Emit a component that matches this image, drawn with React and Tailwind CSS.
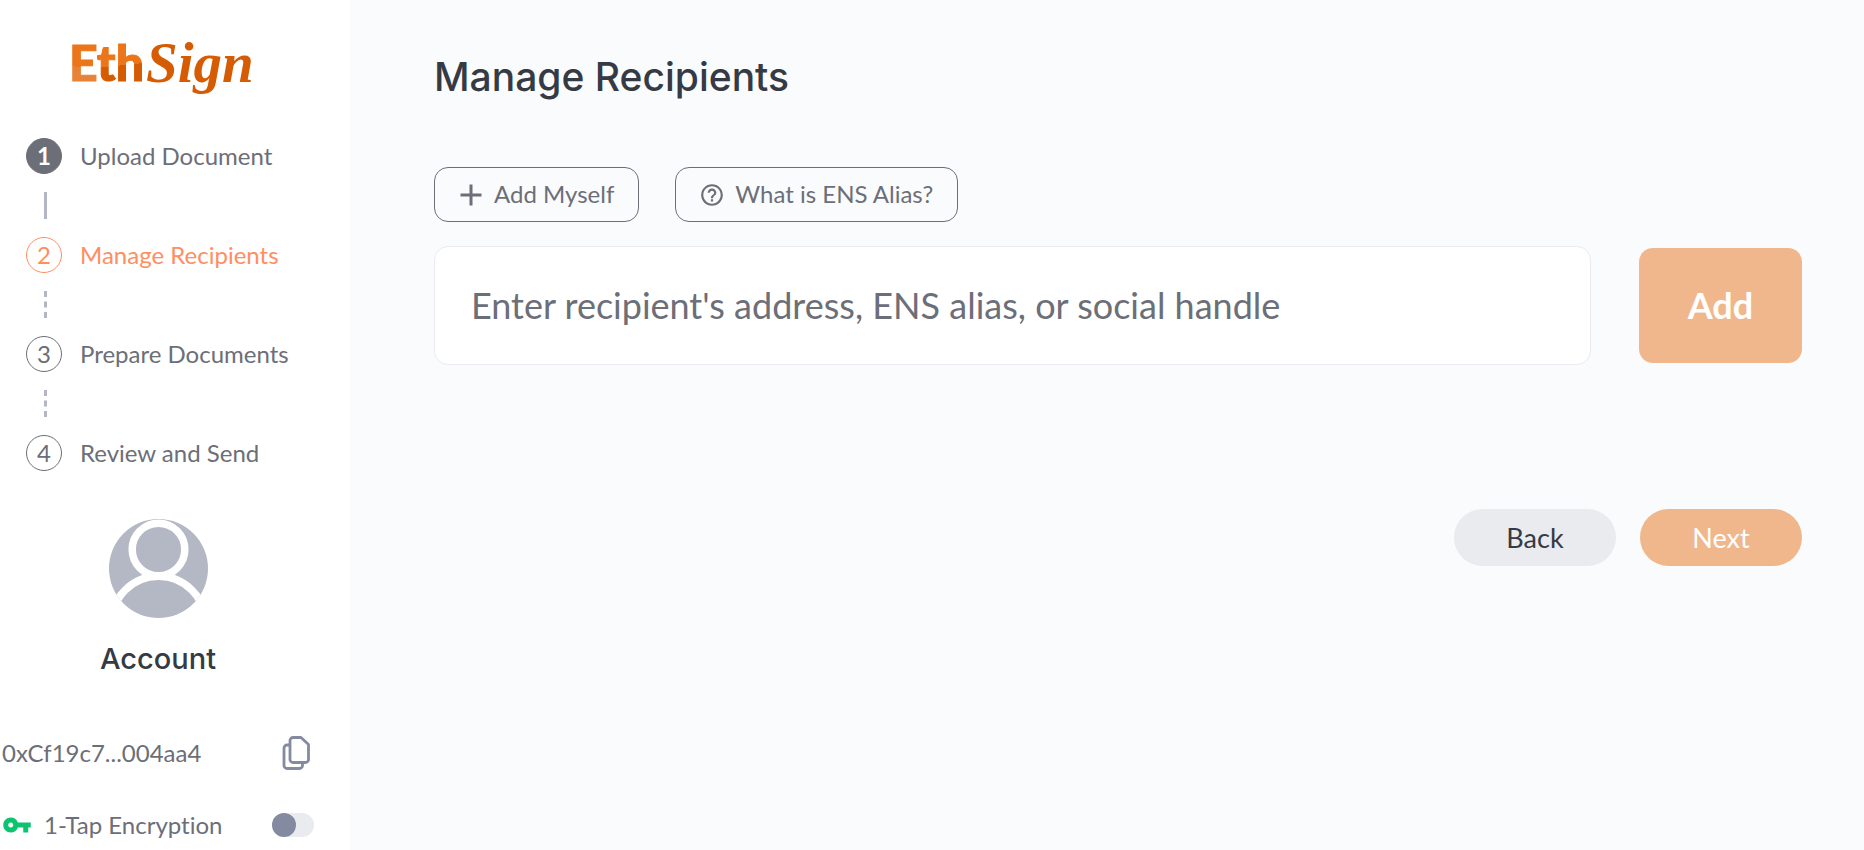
import React, { useState } from "react";
import clsx from "clsx";
import { MdAdd, MdHelpOutline, MdVpnKey } from "react-icons/md";

const steps = [
  { id: 1, label: "Upload Document", status: "done" },
  { id: 2, label: "Manage Recipients", status: "active" },
  { id: 3, label: "Prepare Documents", status: "pending" },
  { id: 4, label: "Review and Send", status: "pending" },
];

export default function App() {
  return (
    <div className="flex min-h-screen bg-[#fafbfd] font-['Lato',sans-serif] text-2xl text-[#6c6e78] [font-variant-ligatures:none]">
      <Sidebar />
      <ManageRecipients />
    </div>
  );
}

function Sidebar() {
  return (
    <aside className="w-[350px] shrink-0 bg-white pt-7">
      <div className="flex w-[316px] flex-col">
        <a href="#" aria-label="EthSign" className="self-center">
          <Logo />
        </a>

        <ol className="mt-8 pl-[26px]">
          {steps.map((step, index) => (
            <Step key={step.id} step={step} isLast={index === steps.length - 1} />
          ))}
        </ol>

        <div className="mt-12 flex flex-col items-center">
          <Avatar />
          <h2 className="mt-[23px] font-['Inter',sans-serif] text-[29px] leading-9 font-medium text-[#353a45]">Account</h2>
        </div>

        <div className="mt-[58px] flex h-9 items-center justify-between pr-1 pl-0.5">
          <span>0xCf19c7...004aa4</span>
          <button type="button" aria-label="Copy address">
            <CopyIcon />
          </button>
        </div>

        <div className="mt-9 flex h-9 items-center pr-0.5 pl-0.5">
          <MdVpnKey className="h-[30px] w-[30px] text-[#0cc46f]" />
          <label htmlFor="encryption" className="ml-3 flex-1">1-Tap Encryption</label>
          <input
            id="encryption"
            type="checkbox"
            role="switch"
            className="h-6 w-[42px] appearance-none rounded-full bg-[#eaebef] before:block before:h-6 before:w-6 before:rounded-full before:bg-[#848ba1] before:content-[''] checked:before:ml-auto"
          />
        </div>
      </div>
    </aside>
  );
}

function Step({ step, isLast }) {
  const { id, label, status } = step;

  return (
    <li>
      <div className="flex h-9 items-center">
        <span
          className={clsx(
            "flex h-9 w-9 items-center justify-center rounded-full border",
            status === "done" && "border-[#6c6e78] bg-[#6c6e78] font-bold text-white",
            status === "active" && "border-[#ff8e61] text-[#ff8e61]",
            status === "pending" && "border-[#6c6e78]"
          )}
        >
          {id}
        </span>
        <span className={clsx("ml-[18px]", status === "active" && "text-[#ff8e61]")}>{label}</span>
      </div>
      {!isLast && (
        <div
          className={clsx(
            "my-[18px] ml-[18px] h-[27px] border-l-3 border-[#b3b7c5]",
            status === "done" ? "border-solid" : "border-dashed"
          )}
        />
      )}
    </li>
  );
}

function ManageRecipients() {
  const [recipient, setRecipient] = useState("");

  return (
    <main className="min-w-0 flex-1 pt-[52px] pr-[62px] pl-[84px]">
      <h1 className="font-['Inter',sans-serif] text-[39px] leading-[50px] font-medium text-[#353a45]">
        Manage Recipients
      </h1>

      <div className="mt-[65px] flex gap-9">
        <OutlineButton icon={MdAdd} iconClass="h-9 w-9">Add Myself</OutlineButton>
        <OutlineButton icon={MdHelpOutline} iconClass="h-[26px] w-[26px]">What is ENS Alias?</OutlineButton>
      </div>

      <div className="mt-6 flex items-center gap-12">
        <input
          type="text"
          aria-label="Recipient"
          placeholder="Enter recipient's address, ENS alias, or social handle"
          value={recipient}
          onChange={(e) => setRecipient(e.target.value)}
          className="h-[119px] min-w-0 flex-1 rounded-[14px] border border-[#eaebef] bg-white px-9 pb-0.5 text-4xl text-[#353a45] placeholder:text-[#6c6e78]"
        />
        <button type="button" className="h-[115px] w-[163px] rounded-[14px] bg-[#f0b78d] pb-0.5 text-4xl font-bold text-white">
          Add
        </button>
      </div>

      <div className="mt-36 flex justify-end gap-6 text-[27px]">
        <button type="button" className="h-[57px] w-[162px] rounded-full bg-[#eaebef] text-[#353a45]">
          Back
        </button>
        <button type="button" className="h-[57px] w-[162px] rounded-full bg-[#f0b78d] text-white">
          Next
        </button>
      </div>
    </main>
  );
}

function OutlineButton({ icon: Icon, iconClass, children }) {
  return (
    <button type="button" className="flex h-[55px] items-center rounded-[14px] border border-[#6c6e78] px-6">
      <span className="flex w-6 justify-center">
        <Icon className={clsx("shrink-0", iconClass)} />
      </span>
      <span className="ml-[11px] pb-0.5">{children}</span>
    </button>
  );
}

function Avatar() {
  return (
    <svg viewBox="0 0 99 99" className="h-[99px] w-[99px]" aria-hidden="true">
      <defs>
        <clipPath id="avatar-clip">
          <circle cx="49.5" cy="49.5" r="49.5" />
        </clipPath>
      </defs>
      <g clipPath="url(#avatar-clip)">
        <rect width="99" height="99" fill="#b4b8c5" />
        <circle cx="49.5" cy="30.5" r="26.3" fill="none" stroke="#fff" strokeWidth="7.5" />
        <circle cx="49.5" cy="104.5" r="47.2" fill="none" stroke="#fff" strokeWidth="7.5" />
      </g>
    </svg>
  );
}

function CopyIcon() {
  return (
    <svg viewBox="0 0 30 36" className="h-9 w-[30px]" fill="none" stroke="#848ba1" strokeWidth="2.8" strokeLinejoin="round" aria-hidden="true">
      <path d="M11 2.5h8l7.500 7v15a3 3 0 0 1-3 3H11a3 3 0 0 1-3-3v-19a3 3 0 0 1 3-3z" />
      <path d="M8 10H5a3 3 0 0 0-3 3v17.500a3 3 0 0 0 3 3h12.500a3 3 0 0 0 3-3v-3" />
    </svg>
  );
}

function Logo() {
  return (
    <svg viewBox="0 0 178 78" className="h-[78px] w-[178px] overflow-visible" aria-hidden="true">
      <defs>
        <linearGradient id="logo-e" gradientUnits="userSpaceOnUse" x1="0" y1="0" x2="-8" y2="78">
          <stop offset="0.48" stopColor="#ec7519" />
          <stop offset="0.48" stopColor="#e78239" />
        </linearGradient>
        <linearGradient id="logo-h" gradientUnits="userSpaceOnUse" x1="40" y1="0" x2="48" y2="78">
          <stop offset="0.49" stopColor="#ec7519" />
          <stop offset="0.49" stopColor="#d65c03" />
        </linearGradient>
      </defs>
      <text x="0" y="53" fontFamily="Lato" fontWeight="900" fontSize="50" strokeWidth="1">
        <tspan fill="url(#logo-e)" stroke="url(#logo-e)">E</tspan>
        <tspan fill="url(#logo-h)" stroke="url(#logo-h)">th</tspan>
      </text>
      <text x="77" y="54" fontFamily="Liberation Serif" fontStyle="italic" fontSize="57" fontWeight="700" fill="#d65c03">
        Sign
      </text>
    </svg>
  );
}
